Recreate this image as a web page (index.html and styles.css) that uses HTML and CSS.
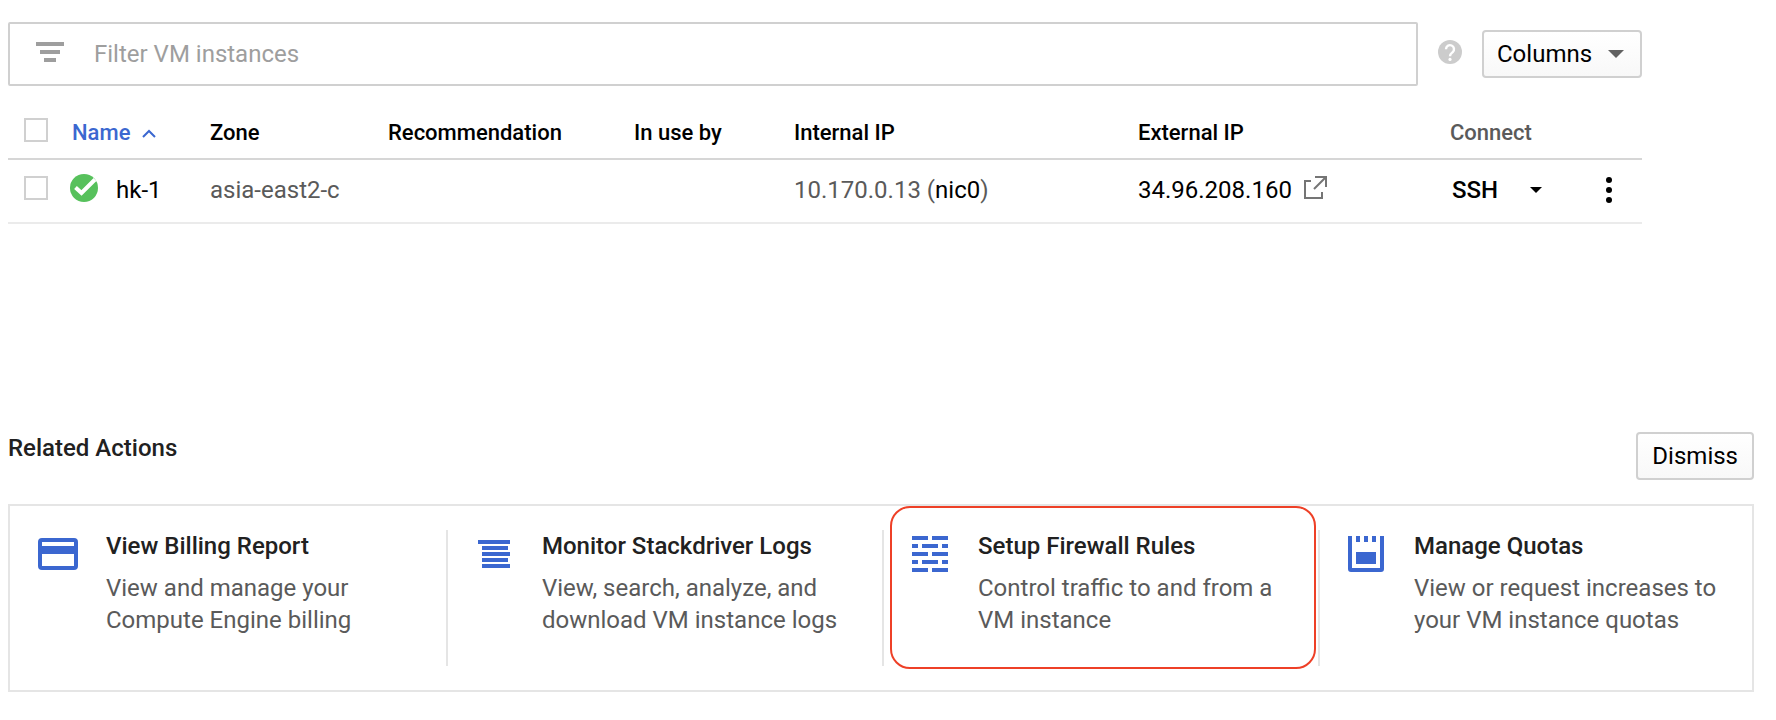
FILE: index.html
```html
<!DOCTYPE html>
<html lang="en">
<head>
<meta charset="utf-8">
<title>VM instances</title>
<link rel="stylesheet" href="styles.css">
</head>
<body>
<main class="page">
  <section class="instances" aria-label="VM instances">
    <div class="toolbar">
      <label class="filter">
        <svg class="filter-icon" width="28" height="20" viewBox="0 0 28 20" fill="#9e9e9e" aria-hidden="true"><path d="M0 0h28v4H0zM4 8h20v4H4zM8 16h12v4H8z"/></svg>
        <input class="filter-input" type="text" placeholder="Filter VM instances" aria-label="Filter VM instances">
      </label>
      <button class="icon-button help" type="button" aria-label="Help">
        <svg width="24" height="24" viewBox="0 0 24 24" aria-hidden="true"><circle cx="12" cy="12" r="12" fill="#ccc"/><path d="M8 9.200a4 4 0 1 1 6.700 2.900C13 13.500 12 14 12 16.200" fill="none" stroke="#fff" stroke-width="2.400"/><circle cx="12" cy="19.400" r="1.600" fill="#fff"/></svg>
      </button>
      <button class="button columns" type="button">Columns
        <svg width="16" height="8" viewBox="0 0 16 8" fill="#616161" aria-hidden="true"><path d="M0 0h16L8 8z"/></svg>
      </button>
    </div>
    <table class="table">
      <colgroup>
        <col class="col-check"><col class="col-name"><col class="col-zone"><col class="col-rec"><col class="col-use"><col class="col-internal"><col class="col-external"><col class="col-connect"><col class="col-menu">
      </colgroup>
      <thead>
        <tr>
          <th><input class="check" type="checkbox" aria-label="Select all instances"></th>
          <th><button class="sort" type="button">Name
            <svg width="14" height="9" viewBox="0 0 14 9" fill="none" stroke="#3b67d0" stroke-width="2" aria-hidden="true"><path d="M1 8l6-6 6 6"/></svg></button></th>
          <th>Zone</th>
          <th>Recommendation</th>
          <th>In use by</th>
          <th>Internal IP</th>
          <th>External IP</th>
          <th class="muted">Connect</th>
          <th></th>
        </tr>
      </thead>
      <tbody>
        <tr>
          <td><input class="check" type="checkbox" aria-label="Select hk-1"></td>
          <td><div class="cell name">
            <svg width="28" height="28" viewBox="0 0 28 28" aria-hidden="true"><circle cx="14" cy="14" r="14" fill="#57c15c"/><path d="M5.500 13.500l6 5.500L25 5.500" fill="none" stroke="#fff" stroke-width="4"/></svg>
            <a class="link" href="#hk-1">hk-1</a></div></td>
          <td class="muted">asia-east2-c</td>
          <td></td>
          <td></td>
          <td class="muted">10.170.0.13 (<a class="link" href="#nic0">nic0</a>)</td>
          <td><a class="link cell external" href="#external">34.96.208.160
            <svg width="24" height="24" viewBox="0 0 24 24" fill="none" stroke="#757575" stroke-width="2" aria-hidden="true"><path d="M8 5H2v17h17v-6M12 1h11v10M22 2L11 13"/></svg></a></td>
          <td><div class="cell connect">
            <button class="ssh" type="button">SSH</button>
            <button class="icon-button" type="button" aria-label="SSH options"><svg width="12" height="6" viewBox="0 0 12 6" aria-hidden="true"><path d="M0 0h12L6 6z"/></svg></button></div></td>
          <td><button class="icon-button" type="button" aria-label="More actions"><svg width="8" height="28" viewBox="0 0 8 28" aria-hidden="true"><circle cx="4" cy="4" r="3"/><circle cx="4" cy="14" r="3"/><circle cx="4" cy="24" r="3"/></svg></button></td>
        </tr>
      </tbody>
    </table>
  </section>

  <section class="related" aria-labelledby="related-title">
    <header class="related-head">
      <h2 class="related-title" id="related-title">Related Actions</h2>
      <button class="button" type="button">Dismiss</button>
    </header>
    <div class="cards">
      <a class="card" href="#billing">
        <svg class="card-icon" width="48" height="48" viewBox="0 0 48 48" aria-hidden="true"><path fill-rule="evenodd" d="M8 8h32a4 4 0 0 1 4 4v24a4 4 0 0 1-4 4H8a4 4 0 0 1-4-4V12a4 4 0 0 1 4-4zm0 4v4h32v-4zm0 12v12h32V24z"/></svg>
        <div class="card-body"><h3 class="card-title">View Billing Report</h3><p class="card-text">View and manage your Compute Engine billing</p></div>
      </a>
      <a class="card" href="#logs">
        <svg class="card-icon" width="48" height="48" viewBox="0 0 48 48" aria-hidden="true"><path d="M8 10h32v4H8zM12 16h26v4H12zM12 22h28v4H12zM12 28h26v4H12zM12 34h28v4H12z"/></svg>
        <div class="card-body"><h3 class="card-title">Monitor Stackdriver Logs</h3><p class="card-text">View, search, analyze, and download VM instance logs</p></div>
      </a>
      <a class="card marked" href="#firewall">
        <svg class="card-icon" width="48" height="48" viewBox="0 0 48 48" aria-hidden="true"><path d="M6 6h16v4H6zM26 6h16v4H26zM6 14h6v4H6zM16 14h16v4H16zM36 14h6v4h-6zM6 22h16v4H6zM26 22h16v4H26zM6 30h6v4H6zM16 30h16v4H16zM36 30h6v4h-6zM6 38h16v4H6zM26 38h16v4H26z"/></svg>
        <div class="card-body"><h3 class="card-title">Setup Firewall Rules</h3><p class="card-text">Control traffic to and from a VM instance</p></div>
      </a>
      <a class="card" href="#quotas">
        <svg class="card-icon" width="48" height="48" viewBox="0 0 48 48" aria-hidden="true"><path d="M6 6h4v32h28V6h4v33a3 3 0 0 1-3 3H9a3 3 0 0 1-3-3zM14 6h4v6h-4zM22 6h4v6h-4zM30 6h4v6h-4zM14 22h20v12H14z"/></svg>
        <div class="card-body"><h3 class="card-title">Manage Quotas</h3><p class="card-text">View or request increases to your VM instance quotas</p></div>
      </a>
    </div>
  </section>
</main>
</body>
</html>
```
FILE: styles.css
```css
* {
  box-sizing: border-box;
}

body {
  margin: 0;
  background: #fff;
  color: #000;
  font: 24px/32px Roboto, "Liberation Sans", sans-serif;
}

.page {
  padding: 22px 22px 28px 8px;
}

button,
input {
  font: inherit;
  color: inherit;
}

svg {
  display: block;
  flex: none;
}

.instances {
  margin-right: 112px;
}

.toolbar {
  display: flex;
  align-items: center;
}

.filter {
  display: flex;
  flex: 1;
  align-items: center;
  gap: 30px;
  height: 64px;
  padding: 0 26px;
  border: 2px solid #d0d0d0;
  border-radius: 2px;
}

.filter-icon {
  margin-bottom: 4px;
}

.filter-input {
  flex: 1;
  min-width: 0;
  padding: 0;
  border: 0;
  outline: 0;
  background: none;
}

.filter-input::placeholder {
  color: #9e9e9e;
  opacity: 1;
}

.icon-button {
  display: block;
  padding: 0;
  border: 0;
  background: none;
}

.help {
  margin: 0 20px 4px;
}

.button {
  display: flex;
  align-items: center;
  justify-content: space-between;
  height: 48px;
  padding: 0 14px;
  border: 2px solid #d0d0d0;
  border-radius: 4px;
  background: linear-gradient(#fff, #f8f8f8);
}

.columns {
  width: 160px;
  padding: 0 16px 0 13px;
}

.table {
  width: 100%;
  margin-top: 16px;
  border-collapse: separate;
  border-spacing: 0;
  table-layout: fixed;
}

.col-check { width: 62px; }
.col-name { width: 140px; }
.col-zone { width: 178px; }
.col-rec { width: 246px; }
.col-use { width: 160px; }
.col-internal { width: 344px; }
.col-external { width: 312px; }
.col-connect { width: 155px; }
.col-menu { width: 37px; }

.table th {
  height: 58px;
  padding: 6px 0 0;
  border-bottom: 2px solid #d6d6d6;
  font-size: 22px;
  font-weight: 500;
  text-align: left;
  white-space: nowrap;
}

.table td {
  height: 64px;
  padding: 0 0 2px;
  border-bottom: 2px solid #ebebeb;
  white-space: nowrap;
}

.table .muted {
  color: #5a5a5a;
}

.check {
  display: block;
  width: 24px;
  height: 24px;
  margin: 0 0 4px 16px;
  border: 2px solid #d0d0d0;
  background: #fff;
  appearance: none;
}

.table th .check {
  margin-bottom: 6px;
}

.check:checked {
  background: #3b67d0;
}

.sort {
  display: flex;
  align-items: center;
  gap: 12px;
  padding: 0 0 0 2px;
  border: 0;
  background: none;
  color: #3b67d0;
}

.link {
  color: #000;
  text-decoration: none;
}

.cell {
  display: flex;
  align-items: center;
}

.name {
  gap: 18px;
}

.name svg,
.external svg {
  margin-bottom: 4px;
}

.external {
  gap: 11px;
}

.connect {
  gap: 32px;
}

.ssh {
  padding: 0 0 0 2px;
  border: 0;
  background: none;
  font-weight: 500;
}

.related {
  margin-top: 208px;
}

.related-head {
  display: flex;
  align-items: flex-start;
  justify-content: space-between;
}

.related-title {
  margin: 0;
  color: #212121;
  font-size: 24px;
  font-weight: 500;
}

.cards {
  display: grid;
  grid-template-columns: repeat(3, 436fr) 434fr;
  margin-top: 24px;
  padding: 24px 0;
  border: 2px solid #e5e5e5;
}

.card {
  position: relative;
  display: flex;
  gap: 24px;
  padding: 0 24px 30px;
  color: #5a5a5a;
  text-decoration: none;
}

.card + .card {
  padding-left: 22px;
  border-left: 2px solid #e5e5e5;
}

.card-icon {
  fill: #3b67d0;
}

.card-title {
  margin: 0 0 10px;
  color: #212121;
  font-size: 24px;
  font-weight: 500;
}

.card-text {
  margin: 0;
}

/* Highlight drawn over the card and its surrounding padding */
.marked::after {
  content: "";
  position: absolute;
  top: -24px;
  right: 2px;
  bottom: -3px;
  left: 6px;
  border: 2px solid #ee4027;
  border-radius: 20px;
  pointer-events: none;
}
```
